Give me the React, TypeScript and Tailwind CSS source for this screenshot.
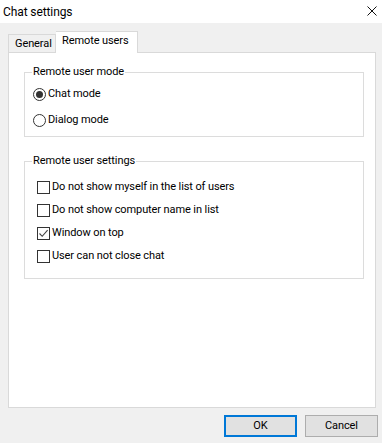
import { useState } from 'react';

const font = { fontFamily: 'Roboto, "Noto Sans", sans-serif' };

function Radio({ label, checked, onClick }: { label: string; checked: boolean; onClick: () => void }) {
  return (
    <div className="flex h-[16px] items-center cursor-default" onClick={onClick}>
      <span className="ml-[8px] flex h-[13px] w-[13px] items-center justify-center rounded-full border border-[#333333] bg-white">
        {checked && <span className="h-[7px] w-[7px] rounded-full bg-[#333333]" />}
      </span>
      <span className="ml-[2px] whitespace-nowrap text-[11px] leading-[16px] tracking-[-0.1px] text-black">{label}</span>
    </div>
  );
}

function Check({ label, checked, onClick }: { label: string; checked: boolean; onClick: () => void }) {
  return (
    <div className="flex h-[16px] items-center cursor-default" onClick={onClick}>
      <span className="ml-[12px] flex h-[13px] w-[13px] items-center justify-center border border-[#333333] bg-white">
        {checked && (
          <svg width="11" height="11" viewBox="0 0 11 11" fill="none">
            <path d="M1.5 5.5 L4.2 8.3 L9.6 2.2" stroke="#444" strokeWidth="1.1" />
          </svg>
        )}
      </span>
      <span className="ml-[2px] whitespace-nowrap text-[11px] leading-[16px] tracking-[-0.1px] text-black">{label}</span>
    </div>
  );
}

export default function App() {
  const [mode, setMode] = useState<'chat' | 'dialog'>('chat');
  const [opts, setOpts] = useState([false, false, true, false]);

  const labels = [
    'Do not show myself in the list of users',
    'Do not show computer name in list',
    'Window on top',
    'User can not close chat',
  ];

  return (
    <div className="flex h-[443px] w-[382px] flex-col bg-[#f0f0f0] text-black" style={font}>
      {/* Title bar */}
      <div className="flex h-[23px] items-center justify-between bg-white pl-[3px] pr-[5px]">
        <span className="whitespace-nowrap text-[12px] leading-[16px] tracking-[-0.1px]">Chat settings</span>
        <svg width="10" height="10" viewBox="0 0 10 10" className="mb-[1px]">
          <path d="M0.5 0.5 L9.5 9.5 M9.5 0.5 L0.5 9.5" stroke="#111" strokeWidth="1" />
        </svg>
      </div>

      {/* Tabs */}
      <div className="flex h-[29px] items-end pl-[8px]">
        <div className="flex h-[18px] w-[48px] items-center whitespace-nowrap border border-b-0 border-[#d9d9d9] bg-[#f0f0f0] pl-[6px] text-[11px] leading-[16px] tracking-[-0.1px]">
          General
        </div>
        <div className="relative top-[1px] flex h-[22px] w-[82px] items-start whitespace-nowrap border border-b-0 border-l-0 border-[#d9d9d9] bg-white pl-[6px] pt-[1px] text-[11px] leading-[16px] tracking-[-0.1px]">
          Remote users
        </div>
      </div>

      {/* Panel */}
      <div className="ml-[8px] mr-[6px] h-[356px] border border-[#d9d9d9] bg-white pl-[15px] pr-[11px] pt-[11px]">
        <fieldset className="m-0 h-[73px] border border-[#dcdcdc] p-0">
          <legend className="ml-[7px] whitespace-nowrap px-[1px] text-[11px] leading-[16px] tracking-[-0.1px]">Remote user mode</legend>
          <div className="mt-[6px] flex flex-col gap-[10px]">
            <Radio label="Chat mode" checked={mode === 'chat'} onClick={() => setMode('chat')} />
            <Radio label="Dialog mode" checked={mode === 'dialog'} onClick={() => setMode('dialog')} />
          </div>
        </fieldset>

        <fieldset className="m-0 mt-[16px] h-[126px] border border-[#dcdcdc] p-0">
          <legend className="ml-[7px] whitespace-nowrap px-[1px] text-[11px] leading-[16px] tracking-[-0.1px]">Remote user settings</legend>
          <div className="mt-[10px] flex flex-col gap-[7px]">
            {labels.map((l, i) => (
              <Check
                key={i}
                label={l}
                checked={opts[i]}
                onClick={() => setOpts(opts.map((v, j) => (j === i ? !v : v)))}
              />
            ))}
          </div>
        </fieldset>
      </div>

      {/* Buttons */}
      <div className="mt-[7px] flex justify-end gap-[8px] pr-[4px]">
        <button className="flex h-[22px] w-[73px] items-center justify-center border-2 border-[#0078d7] bg-[#e1e1e1] text-[11px] leading-[16px] tracking-[-0.1px]">
          OK
        </button>
        <button className="flex h-[22px] w-[73px] items-center justify-center border border-[#adadad] bg-[#e1e1e1] text-[11px] leading-[16px] tracking-[-0.1px]">
          Cancel
        </button>
      </div>
    </div>
  );
}
